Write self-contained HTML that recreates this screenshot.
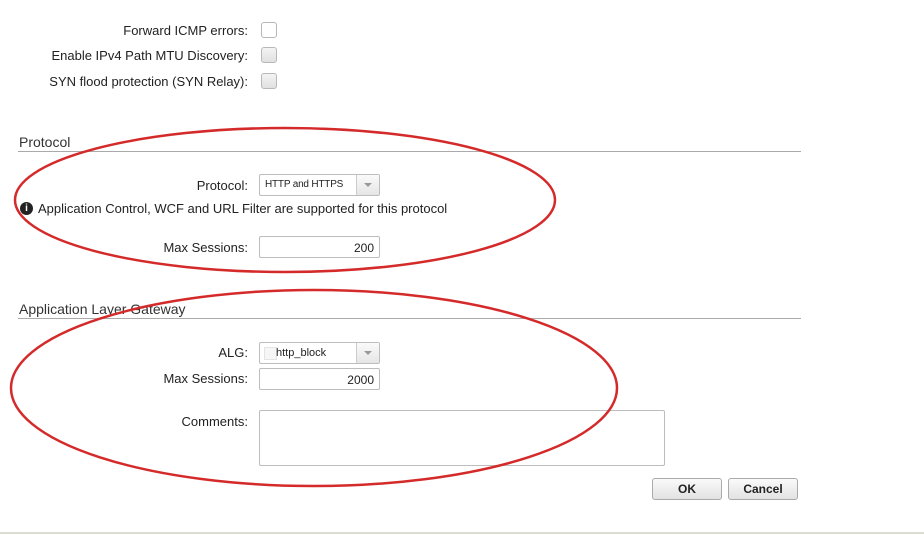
<!DOCTYPE html>
<html><head><style>
body{margin:0;width:924px;height:536px;background:#fff;font-family:"Liberation Sans",sans-serif;font-size:13px;color:#222;position:relative;overflow:hidden}
.a{position:absolute}
.lbl{position:absolute;right:676px;text-align:right;white-space:nowrap}
.cb{position:absolute;left:261px;width:14px;height:14px;border:1px solid #b8b8b8;border-radius:3px;background:linear-gradient(#f4f4f4,#e0e0e0)}
.hd{position:absolute;left:19px;font-size:14px;color:#333}
.ln{position:absolute;left:18px;width:783px;height:1px;background:#aaa}
.in{position:absolute;left:259px;width:121px;height:21px;border:1px solid #bdbdbd;border-radius:2px;background:#fff;box-sizing:border-box;font-size:12px}
.sel .arr{position:absolute;right:0;top:0;width:22px;height:20px;border-left:1px solid #ccc;background:linear-gradient(#fafafa,#e6e6e6)}
.sel .arr:after{content:"";position:absolute;left:7px;top:8px;border:4px solid transparent;border-top:4px solid #999}
.btn{position:absolute;top:478px;height:22px;border:1px solid #aaa;border-radius:3px;background:linear-gradient(#fafafa,#e2e2e2);font-weight:bold;font-size:12px;text-align:center;line-height:20px;box-sizing:border-box}
</style></head><body>
<div class="lbl" style="top:23px">Forward ICMP errors:</div><div class="cb" style="top:22px;background:#fff"></div>
<div class="lbl" style="top:48px">Enable IPv4 Path MTU Discovery:</div><div class="cb" style="top:47px"></div>
<div class="lbl" style="top:74px">SYN flood protection (SYN Relay):</div><div class="cb" style="top:73px"></div>

<div class="hd" style="top:134px">Protocol</div><div class="ln" style="top:151px"></div>
<div class="lbl" style="top:178px">Protocol:</div>
<div class="in sel" style="top:174px;height:22px"><span class="a" style="left:5px;top:4px;font-size:10px;letter-spacing:-0.2px">HTTP and HTTPS</span><div class="arr"></div></div>
<div class="a" style="left:20px;top:202px;width:13px;height:13px;border-radius:50%;background:#222;color:#fff;font-size:10px;font-weight:bold;text-align:center;line-height:13px">i</div>
<div class="a" style="left:38px;top:201px">Application Control, WCF and URL Filter are supported for this protocol</div>
<div class="lbl" style="top:240px">Max Sessions:</div>
<div class="in" style="top:236px;height:22px"><span class="a" style="right:5px;top:4px">200</span></div>

<div class="hd" style="top:301px">Application Layer Gateway</div><div class="ln" style="top:318px"></div>
<div class="lbl" style="top:345px">ALG:</div>
<div class="in sel" style="top:342px;height:22px"><span class="a" style="left:4px;top:4px;width:11px;height:11px;border:1px solid #e4e4e4;background:#f6f6f6"></span><span class="a" style="left:16px;top:4px;font-size:11px">http_block</span><div class="arr"></div></div>
<div class="lbl" style="top:371px">Max Sessions:</div>
<div class="in" style="top:368px;height:22px"><span class="a" style="right:5px;top:4px">2000</span></div>
<div class="lbl" style="top:414px">Comments:</div>
<div class="in" style="top:410px;width:406px;height:56px"></div>
<div class="btn" style="left:652px;width:70px">OK</div>
<div class="btn" style="left:728px;width:70px">Cancel</div>
<div class="a" style="left:0;top:532px;width:924px;height:2px;background:#dcdcd4"></div>

<svg class="a" style="left:0;top:0" width="924" height="536">
<ellipse cx="285" cy="200" rx="270" ry="72" fill="none" stroke="#d42a2a" stroke-width="2.5"/>
<ellipse cx="314" cy="388" rx="303" ry="98" fill="none" stroke="#d42a2a" stroke-width="2.5"/>
</svg>
</body></html>
